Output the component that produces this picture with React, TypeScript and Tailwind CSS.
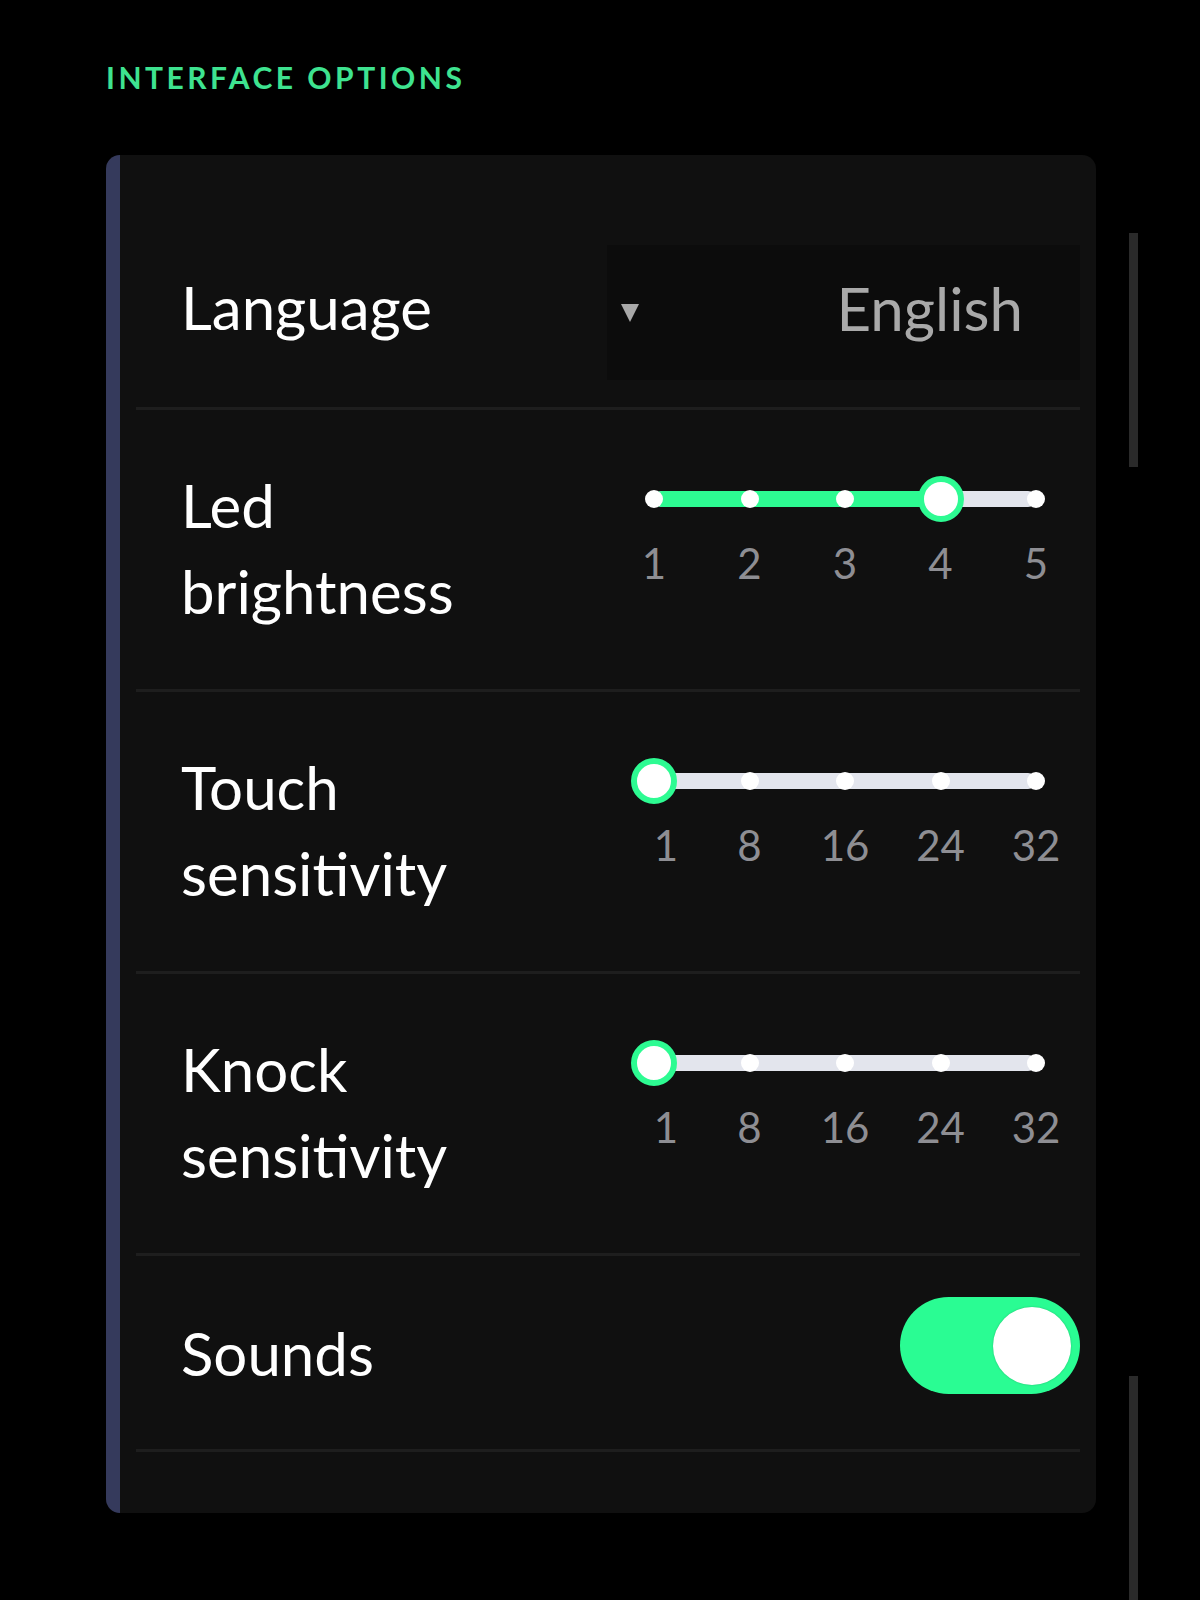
import React from 'react';

const GREEN = '#2dfb92';
const TRACK = 382;

type Mark = { label: string; at: number };

function Slider({ value, dots, marks }: { value: number; dots: number[]; marks: Mark[] }) {
  const thumbX = 9 + value * TRACK;
  return (
    <div className="relative w-[400px] h-[130px] mr-[35px]">
      <div className="absolute left-[9px] top-[29px] h-[16px] w-[382px] rounded-full bg-[#e3e5ed]" />
      <div
        className="absolute left-[9px] top-[29px] h-[16px] rounded-l-full"
        style={{ width: thumbX - 9, backgroundColor: GREEN }}
      />
      {dots.map((d) => (
        <div
          key={d}
          className="absolute top-[28px] h-[18px] w-[18px] -translate-x-1/2 rounded-full bg-white"
          style={{ left: 9 + d * TRACK }}
        />
      ))}
      <div
        className="absolute top-[14px] h-[46px] w-[46px] -translate-x-1/2 rounded-full border-[6px] border-[#2dfb92] bg-white"
        style={{ left: thumbX }}
      />
      {marks.map((m) => (
        <div
          key={m.label}
          className="absolute top-[80px] -translate-x-1/2 text-[42px] leading-[42px] text-[#8e8e93]"
          style={{ left: 9 + m.at * TRACK }}
        >
          {m.label}
        </div>
      ))}
    </div>
  );
}

function SliderRow({ label, value, marks }: { label: string; value: number; marks: Mark[] }) {
  return (
    <div className="flex h-[282px] items-start justify-between border-b-[3px] border-[#1e1e1e] pl-[45px] pt-[52px]">
      <div className="w-[330px] text-[60px] leading-[86px] text-white">{label}</div>
      <Slider value={value} dots={[0, 0.25, 0.5, 0.75, 1]} marks={marks} />
    </div>
  );
}

const sens: Mark[] = [
  { label: '1', at: 1 / 32 },
  { label: '8', at: 0.25 },
  { label: '16', at: 0.5 },
  { label: '24', at: 0.75 },
  { label: '32', at: 1 },
];

export default function App() {
  return (
    <div
      className="relative min-h-[1600px] overflow-hidden bg-black pl-[106px] pt-[59px]"
      style={{ fontFamily: 'Lato, "Noto Sans", sans-serif' }}
    >
      <h2 className="text-[30px] font-bold leading-[36px] tracking-[3.5px] text-[#3ee390]">
        INTERFACE OPTIONS
      </h2>

      <div className="mt-[60px] w-[990px] rounded-[14px] border-l-[14px] border-[#353a5c] bg-[#101010] pb-[61px]">
        <div className="mx-[16px]">
          {/* Language */}
          <div className="flex items-center justify-between border-b-[3px] border-[#1e1e1e] pb-[27px] pl-[45px] pt-[90px]">
            <div className="mb-[12px] text-[60px] leading-[86px] text-white">Language</div>
            <div className="flex h-[135px] w-[473px] items-center justify-between bg-[#0c0c0c] pl-[14px] pr-[57px]">
              <svg width="18" height="18" viewBox="0 0 18 18">
                <polygon points="0,0 18,0 9,18" fill="#a8a8a8" />
              </svg>
              <span className="mb-[10px] text-[60px] leading-[86px] text-[#a9a9a9]">English</span>
            </div>
          </div>

          <SliderRow
            label="Led brightness"
            value={0.75}
            marks={[
              { label: '1', at: 0 },
              { label: '2', at: 0.25 },
              { label: '3', at: 0.5 },
              { label: '4', at: 0.75 },
              { label: '5', at: 1 },
            ]}
          />
          <SliderRow label="Touch sensitivity" value={0} marks={sens} />
          <SliderRow label="Knock sensitivity" value={0} marks={sens} />

          {/* Sounds */}
          <div className="flex h-[196px] items-center justify-between border-b-[3px] border-[#1e1e1e] pl-[45px]">
            <div className="text-[60px] leading-[86px] text-white">Sounds</div>
            <div className="mb-[14px] flex h-[97px] w-[180px] items-center justify-end rounded-full bg-[#2afc93] pr-[9px]">
              <div className="h-[78px] w-[78px] rounded-full bg-white shadow-[0_0_2px_rgba(0,0,0,0.25)]" />
            </div>
          </div>
        </div>
      </div>

      <div className="absolute left-[1129px] top-[233px] h-[234px] w-[9px] bg-[#2a2a2a]" />
      <div className="absolute left-[1129px] top-[1376px] h-[224px] w-[9px] bg-[#2a2a2a]" />
    </div>
  );
}
